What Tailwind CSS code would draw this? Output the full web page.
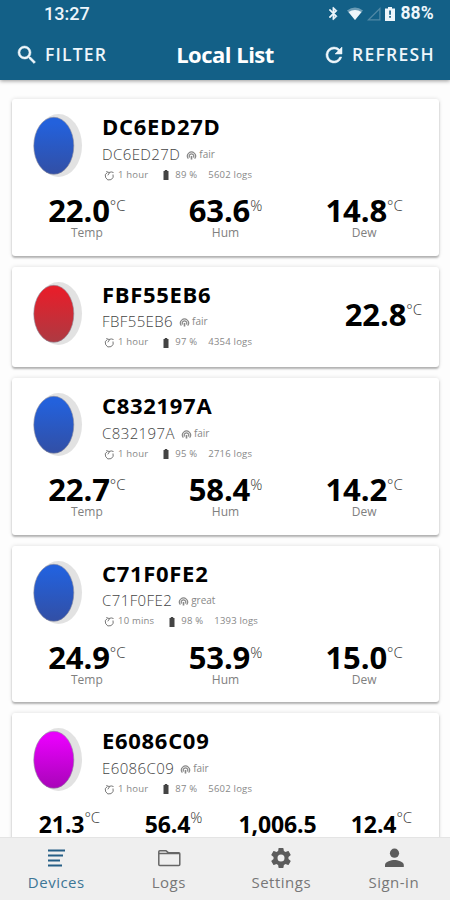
<!DOCTYPE html>
<html lang="en">

<head>
  <meta charset="UTF-8" />
  <meta name="viewport" content="width=device-width, initial-scale=1.0" />
  <title>Local List</title>
  <script src="https://cdn.jsdelivr.net/npm/@tailwindcss/browser@4"></script>
</head>

<body class="bg-[#fdfdfd] font-['Open_Sans',sans-serif]">
  <div class="w-[450px] h-[900px] flex flex-col overflow-hidden">

    <!-- Header -->
    <header class="h-20 shrink-0 bg-[#136087] text-[#eef6fb] shadow-[0_1px_4px_rgba(0,0,0,0.4)] z-10">
      <!-- Status bar -->
      <div class="h-[27px] pl-11 pr-4 flex items-center justify-between font-[Roboto,sans-serif] font-medium text-[18px]">
        <span>13:27</span>
        <div class="flex items-center">
          <svg class="w-[15px] h-[15px] mr-[6px]" viewBox="0 0 24 24" fill="currentColor" stroke="currentColor" stroke-width="1"><path d="M17.7 7.7 12 2h-1v7.600L6.400 5 5 6.400l5.600 5.600L5 17.600 6.400 19l4.600-4.600V22h1l5.700-5.700-4.300-4.300 4.300-4.300zM13 5.800l1.900 1.900L13 9.600V5.800zm1.900 10.500L13 18.200v-3.800l1.900 1.900z"/></svg>
          <svg class="w-4 h-[13px] mr-1" viewBox="0 0 16 13" fill="currentColor"><path opacity=".4" d="M0 3.500Q8-2.500 16 3.500L8 13z"/><path d="M1.500 5Q8 1 14.500 5L8 13z"/></svg>
          <svg class="w-[14px] h-[14px] mr-1" viewBox="0 0 14 14" fill="none" stroke="#5088a5" stroke-width="1.200"><path d="M1.500 12.800 12.900 1.500v11.300z"/></svg>
          <svg class="w-[10px] h-[14px] mr-[5px]" viewBox="0 0 10 14"><path fill="currentColor" d="M3 0h4v1.500h3V14H0V1.500h3z"/><path fill="#136087" d="M4.200 3.500h1.700v4.300H4.200zM4.200 9h1.700v1.800H4.200z"/></svg>
          <span class="text-[17.500px] font-bold tracking-[0.2px]">88%</span>
        </div>
      </div>
      <!-- Toolbar -->
      <div class="h-[53px] grid grid-cols-[120px_1fr_120px] items-center px-[15px] pt-[2px]">
        <button class="flex items-center gap-[6px] text-[17.500px] font-semibold tracking-[1.2px]">
          <svg class="w-6 h-6" viewBox="0 0 24 24" fill="currentColor" stroke="currentColor" stroke-width="0.500"><path d="M15.500 14h-.79l-.28-.27A6.470 6.470 0 0 0 16 9.500 6.500 6.500 0 1 0 9.500 16c1.610 0 3.090-.59 4.230-1.570l.27.28v.79l5 4.990L20.490 19l-4.990-5zm-6 0C7.010 14 5 11.990 5 9.500S7.010 5 9.500 5 14 7.010 14 9.500 11.990 14 9.500 14z"/></svg>
          FILTER
        </button>
        <h1 class="text-center text-[22px] font-bold tracking-[-0.5px] text-white whitespace-nowrap">Local List</h1>
        <button class="flex items-center justify-end gap-[6px] text-[17.500px] font-semibold tracking-[1.3px]">
          <svg class="w-6 h-6 shrink-0" viewBox="0 0 24 24" fill="currentColor" stroke="currentColor" stroke-width="0.500"><path d="M17.650 6.350A7.958 7.958 0 0 0 12 4a8 8 0 1 0 7.730 10h-2.080A6 6 0 1 1 12 6c1.660 0 3.140.69 4.220 1.780L13 11h7V4l-2.350 2.350z"/></svg>
          REFRESH
        </button>
      </div>
    </header>

    <!-- Device list -->
    <main id="device-list" class="flex-1 min-h-0 overflow-hidden pl-3 pr-[11px] pt-[19px] flex flex-col gap-[11px]"></main>

    <!-- Tab bar -->
    <nav class="h-[63px] shrink-0 bg-[#efefef] border-t border-[#e4e4e4] grid grid-cols-4 text-[15px] tracking-[0.5px] text-[#777] z-10">
      <a class="flex flex-col items-center pt-2 text-[#3d7696]">
        <svg class="w-6 h-6" viewBox="0 0 24 24" fill="none" stroke="#265f86" stroke-width="2.200"><path d="M4 4.500h17M4 9.500h15M4 14.500h12M4 19.500h14"/></svg>
        <span class="leading-[25px]">Devices</span>
      </a>
      <a class="flex flex-col items-center pt-2">
        <svg class="w-6 h-6" viewBox="0 0 24 24" fill="none" stroke="#666" stroke-width="1.500" stroke-linejoin="round"><path d="M1.800 18.500V5.700q0-1 1-1h6l2.500 2h10.500q1 0 1 1v10.800q0 1-1 1h-19q-1 0-1-1zM1.800 7.500h21"/></svg>
        <span class="leading-[25px]">Logs</span>
      </a>
      <a class="flex flex-col items-center pt-2">
        <svg class="w-6 h-6" viewBox="0 0 24 24" fill="#5c5c5c"><path d="M19.430 12.980c.04-.32.07-.64.07-.98s-.03-.66-.07-.98l2.110-1.650c.19-.15.24-.42.12-.64l-2-3.460c-.12-.22-.39-.3-.61-.22l-2.490 1c-.52-.4-1.080-.73-1.690-.98l-.38-2.650A.488.488 0 0 0 14 2h-4c-.25 0-.46.18-.49.42l-.38 2.650c-.61.25-1.170.59-1.690.98l-2.490-1c-.23-.09-.49 0-.61.22l-2 3.460c-.13.22-.07.49.12.64l2.110 1.650c-.04.32-.07.65-.07.98s.03.66.07.98l-2.110 1.650c-.19.15-.24.42-.12.64l2 3.460c.12.22.39.3.61.22l2.490-1c.52.4 1.080.73 1.690.98l.38 2.650c.03.24.24.42.49.42h4c.25 0 .46-.18.49-.42l.38-2.650c.61-.25 1.170-.59 1.690-.98l2.490 1c.23.09.49 0 .61-.22l2-3.460c.12-.22.07-.49-.12-.64l-2.110-1.650zM12 15.500a3.500 3.500 0 1 1 0-7 3.500 3.500 0 0 1 0 7z"/></svg>
        <span class="leading-[25px]">Settings</span>
      </a>
      <a class="flex flex-col items-center pt-2">
        <svg class="w-6 h-6" viewBox="0 0 24 24" fill="#5c5c5c"><circle cx="12.500" cy="7.200" r="4.600"/><path d="M3 21v-2c0-3.200 6.300-4.900 9.400-4.900s9.400 1.700 9.400 4.900v2z"/></svg>
        <span class="leading-[25px]">Sign-in</span>
      </a>
    </nav>
  </div>

  <script>
    const devices = [
      { id: "DC6ED27D", color: "blue", signal: "fair", interval: "1 hour", battery: "89 %", logs: "5602 logs", values: [["22.0", "°C", "Temp"], ["63.6", "%", "Hum"], ["14.8", "°C", "Dew"]] },
      { id: "FBF55EB6", color: "red", signal: "fair", interval: "1 hour", battery: "97 %", logs: "4354 logs", values: [["22.8", "°C"]] },
      { id: "C832197A", color: "blue", signal: "fair", interval: "1 hour", battery: "95 %", logs: "2716 logs", values: [["22.7", "°C", "Temp"], ["58.4", "%", "Hum"], ["14.2", "°C", "Dew"]] },
      { id: "C71F0FE2", color: "blue", signal: "great", interval: "10 mins", battery: "98 %", logs: "1393 logs", values: [["24.9", "°C", "Temp"], ["53.9", "%", "Hum"], ["15.0", "°C", "Dew"]] },
      { id: "E6086C09", color: "magenta", signal: "fair", interval: "1 hour", battery: "87 %", logs: "5602 logs", values: [["21.3", "°C"], ["56.4", "%"], ["1,006.5", ""], ["12.4", "°C"]] },
    ];

    // top and bottom colour of each disc
    const discs = {
      blue: ["#2361dc", "#324fa5"],
      red: ["#e51f2b", "#ad3a42"],
      magenta: ["#e800fb", "#a805b8"],
    };

    const discIcon = (color) => `
      <svg class="w-[50px] h-[66px]" viewBox="0 0 50 66">
        <defs>
          <linearGradient id="disc-${color}" x1="0" y1="0" x2="0" y2="1">
            <stop offset="0.1" stop-color="${discs[color][0]}" />
            <stop offset="1" stop-color="${discs[color][1]}" />
          </linearGradient>
        </defs>
        <ellipse cx="25.500" cy="32.500" rx="23.500" ry="31.500" fill="#e2e2e2" />
        <ellipse cx="20.800" cy="32.800" rx="20" ry="28.500" fill="url(#disc-${color})" stroke="#8c8c9a" stroke-width="0.600" />
      </svg>`;

    const reading = ([value, unit], size) => `
      <div class="flex items-start justify-center">
        <span class="${size === "small" ? "text-[23px] leading-[32px]" : "text-[31px] leading-[32px]"} font-bold tracking-[-0.1px] text-black">${value}</span>
        <span class="${size === "small" ? "leading-[18px]" : "leading-[22px]"} text-[15px] font-light text-[#333]">${unit}</span>
      </div>`;

    const card = (d) => {
      const single = d.values.length === 1;
      const four = d.values.length === 4;
      return `
      <section class="${single ? "h-[100.5px]" : "h-[156.5px]"} shrink-0 bg-white rounded-[3px] px-[5.5px] shadow-[0_2px_2px_rgba(0,0,0,0.26),0_0_4px_rgba(0,0,0,0.13)]">
        <div class="h-[91px] flex">
          <div class="w-[84.5px] pl-[15px] pt-[14px]">${discIcon(d.color)}</div>
          <div class="flex-1 pt-[13px]">
            <h2 class="text-[22px] leading-[28px] font-bold tracking-[0.7px] text-black">${d.id}</h2>
            <div class="flex items-center h-[28px] font-light text-[#444]">
              <span class="text-[15px] tracking-[0.4px]">${d.id}</span>
              <svg class="w-[11px] h-[9px] ml-[6px] mr-[2px] mt-[2px]" viewBox="0 0 11 10" fill="none" stroke="#888" stroke-width="1.300"><path d="M2 8.500A4.500 4.500 0 1 1 9 8.500M3.500 7.200a2.500 2.500 0 1 1 4 0"/><path d="M5.500 5.500v4" stroke-width="1.800"/></svg>
              <span class="text-[10px] font-normal text-[#888]">${d.signal}</span>
            </div>
            <div class="flex items-center h-[14px] pl-[2px] text-[9.500px] tracking-[0.2px] text-[#888]">
              <svg class="w-[11px] h-[11px] mr-[3px]" viewBox="0 0 11 11" fill="none" stroke="#777" stroke-width="1"><path d="M3.300 2.500A4 4 0 1 0 9 4.500M9.500 2.500A5 5 0 0 0 5 2.500M2.300 1.500l3.200 1.200L3.800 5.300"/></svg>
              <span>${d.interval}</span>
              <svg class="w-[6px] h-[10px] ml-[15px] mr-[6px]" viewBox="0 0 6 10" fill="#444"><path d="M1.800 0h2.400v1H5.500v9h-5V1h1.300z"/></svg>
              <span>${d.battery}</span>
              <span class="ml-[11px]">${d.logs}</span>
            </div>
          </div>
          ${single ? `<div class="pt-[31px] pr-[11.5px]">${reading(d.values[0])}</div>` : ""}
        </div>
        ${single ? "" : `
        <div class="grid pt-1 ${four ? "grid-cols-4" : "grid-cols-3"}">
          ${d.values.map((v) => `
          <div class="text-center">
            ${reading(v, four ? "small" : "large")}
            ${v[2] ? `<p class="text-[12px] leading-[14px] text-[#808080]">${v[2]}</p>` : ""}
          </div>`).join("")}
        </div>`}
      </section>`;
    };

    document.getElementById("device-list").innerHTML = devices.map(card).join("");
  </script>
</body>

</html>
